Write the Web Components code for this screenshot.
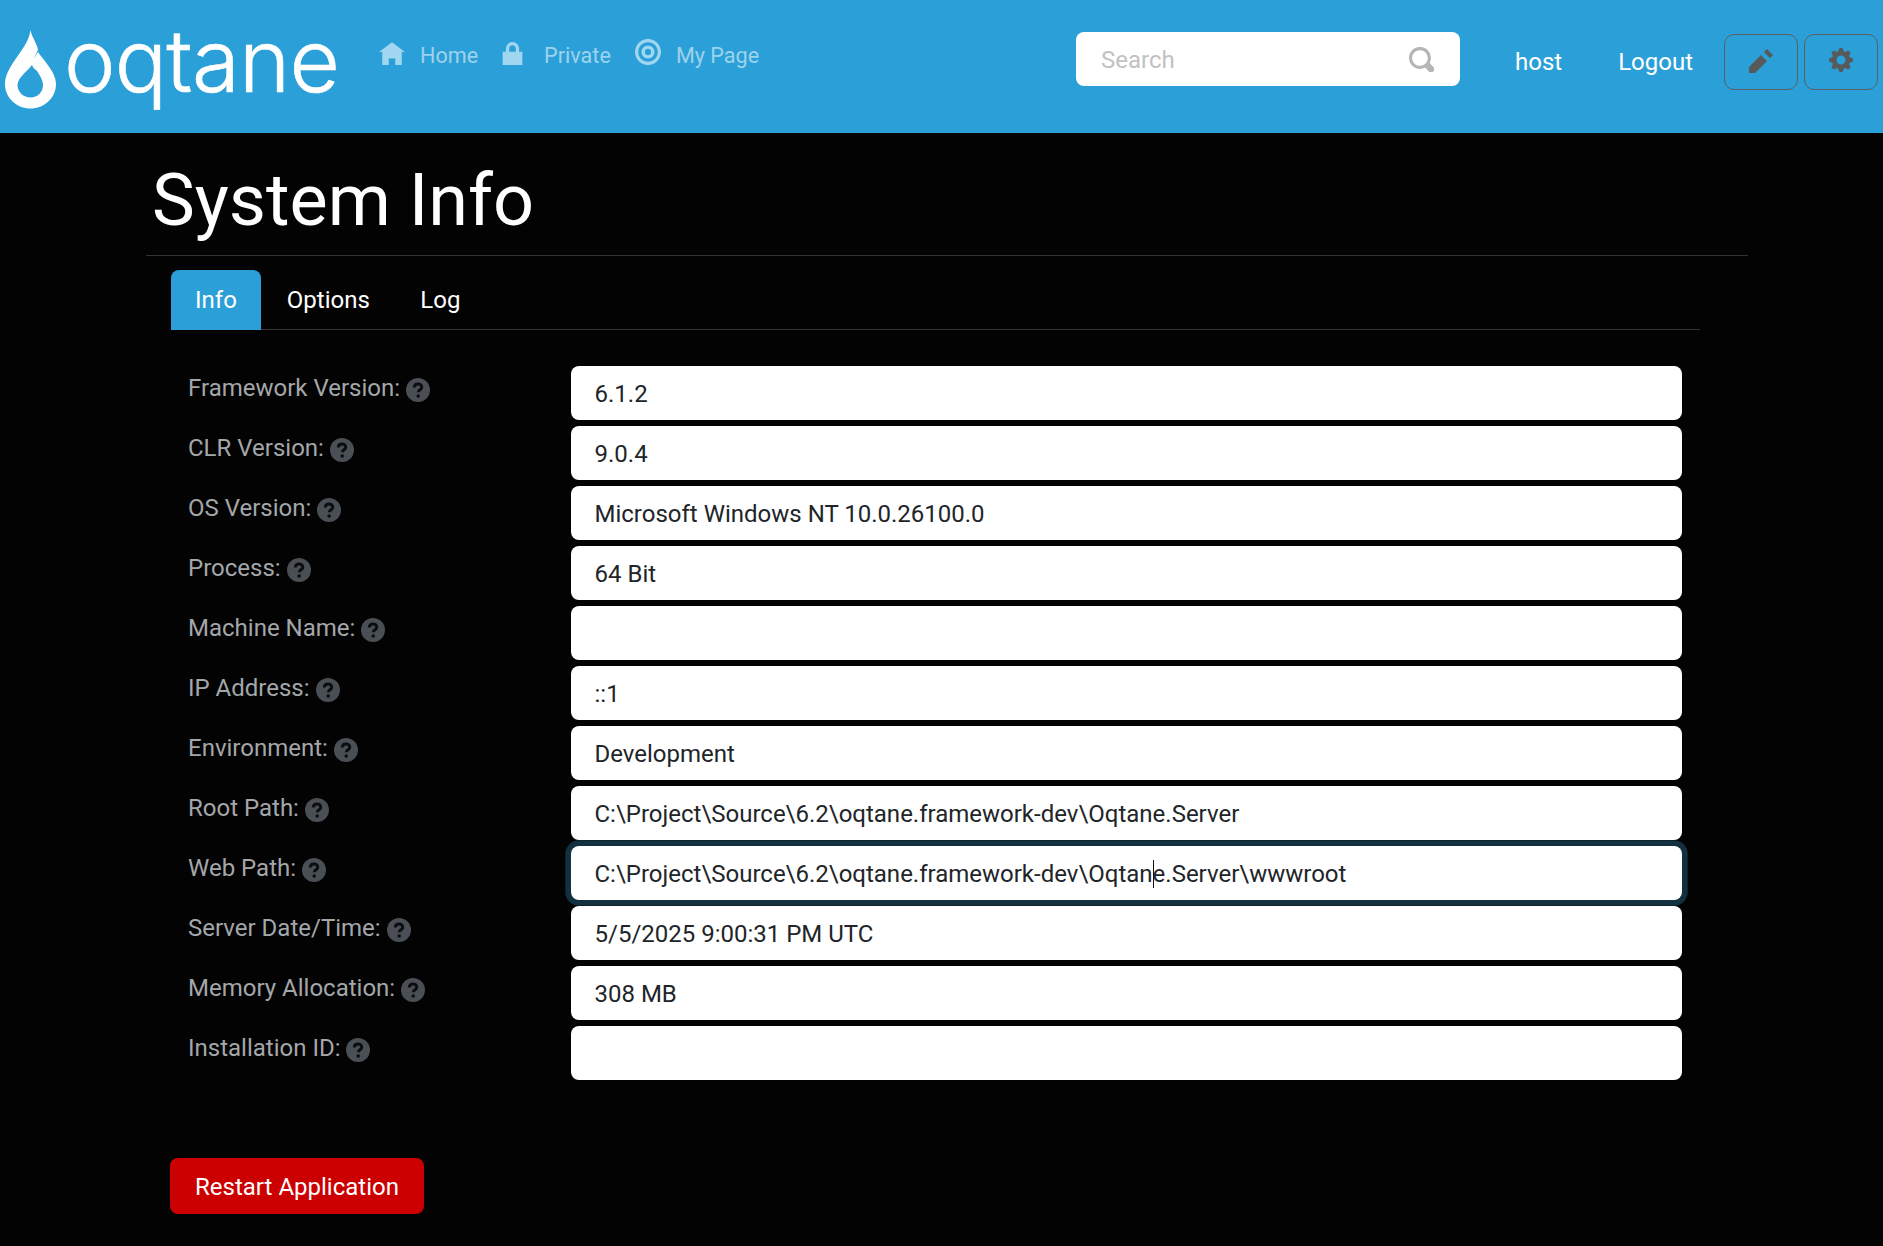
<!DOCTYPE html>
<html lang="en">
<head>
<meta charset="utf-8">
<title>System Info</title>
<style>
html,body{margin:0;padding:0;background:#030303;}
body{font-family:Roboto,"Liberation Sans",sans-serif;font-size:24px;color:#fff;}
</style>
</head>
<body>
<oq-app>
  <oq-header slot="header">
    <oq-logo>oqtane</oq-logo>
    <oq-nav-link icon="home">Home</oq-nav-link>
    <oq-nav-link icon="lock">Private</oq-nav-link>
    <oq-nav-link icon="target">My Page</oq-nav-link>
    <oq-search></oq-search>
    <oq-user-link>host</oq-user-link>
    <oq-user-link>Logout</oq-user-link>
    <oq-icon-button icon="pencil"></oq-icon-button>
    <oq-icon-button icon="cog"></oq-icon-button>
  </oq-header>
  <oq-title>System Info</oq-title>
  <oq-tabs>
    <oq-tab active>Info</oq-tab>
    <oq-tab>Options</oq-tab>
    <oq-tab>Log</oq-tab>
  </oq-tabs>
  <oq-form>
    <oq-field label="Framework Version:">6.1.2</oq-field>
    <oq-field label="CLR Version:">9.0.4</oq-field>
    <oq-field label="OS Version:">Microsoft Windows NT 10.0.26100.0</oq-field>
    <oq-field label="Process:">64 Bit</oq-field>
    <oq-field label="Machine Name:"></oq-field>
    <oq-field label="IP Address:">::1</oq-field>
    <oq-field label="Environment:">Development</oq-field>
    <oq-field label="Root Path:">C:\Project\Source\6.2\oqtane.framework-dev\Oqtane.Server</oq-field>
    <oq-field label="Web Path:" focused>C:\Project\Source\6.2\oqtane.framework-dev\Oqtan<oq-caret></oq-caret>e.Server\wwwroot</oq-field>
    <oq-field label="Server Date/Time:">5/5/2025 9:00:31 PM UTC</oq-field>
    <oq-field label="Memory Allocation:">308 MB</oq-field>
    <oq-field label="Installation ID:"></oq-field>
  </oq-form>
  <oq-danger-button>Restart Application</oq-danger-button>
</oq-app>
<script>
const ICONS = {
  home: ['0 0 8 7','M4 0l-4 3h1v4h2v-2h2v2h2v-4.03l1 .03-4-3z'],
  lock: ['0 0 6 7','M3 0c-1.1 0-2 .9-2 2v1h-1v4h6v-4h-1v-1c0-1.1-.9-2-2-2zm0 1c.56 0 1 .44 1 1v1h-2v-1c0-.56.44-1 1-1z'],
  target: ['0 0 8 8','M4 0c-2.2 0-4 1.8-4 4s1.8 4 4 4 4-1.8 4-4-1.8-4-4-4zm0 1c1.66 0 3 1.34 3 3s-1.34 3-3 3-3-1.34-3-3 1.34-3 3-3zm0 1c-1.1 0-2 .9-2 2s.9 2 2 2 2-.9 2-2-.9-2-2-2zm0 1c.56 0 1 .44 1 1s-.44 1-1 1-1-.44-1-1 .44-1 1-1z'],
  pencil: ['0 0 8 8','M6 0l-1 1 2 2 1-1-2-2zm-2 2l-4 4v2h2l4-4-2-2z'],
  cog: ['0 0 8 8','M3.5 0l-.5 1.19c-.1.03-.19.08-.28.13l-1.19-.5-.72.72.5 1.19c-.05.1-.09.18-.13.28l-1.19.5v1l1.19.5c.04.1.08.18.13.28l-.5 1.19.72.72 1.19-.5c.09.04.18.09.28.13l.5 1.19h1l.5-1.19c.09-.04.19-.08.28-.13l1.19.5.72-.72-.5-1.19c.04-.09.09-.19.13-.28l1.19-.5v-1l-1.19-.5c-.03-.09-.08-.19-.13-.28l.5-1.19-.72-.72-1.19.5c-.09-.04-.19-.09-.28-.13l-.5-1.19h-1zm.5 2.5c.83 0 1.5.67 1.5 1.5s-.67 1.5-1.5 1.5-1.5-.67-1.5-1.5.67-1.5 1.5-1.5z'],
  search: ['0 0 8 8','M3.5 0c-1.93 0-3.5 1.57-3.5 3.5s1.57 3.5 3.5 3.5c.59 0 1.17-.14 1.66-.41a1 1 0 0 0 .13.13l1 1a1.02 1.02 0 1 0 1.44-1.44l-1-1a1 1 0 0 0-.16-.13c.27-.49.44-1.06.44-1.66 0-1.93-1.57-3.5-3.5-3.5zm0 1c1.39 0 2.5 1.11 2.5 2.5 0 .66-.24 1.27-.66 1.72-.01.01-.02.02-.03.03a1 1 0 0 0-.13.13c-.44.4-1.04.63-1.69.63-1.39 0-2.5-1.11-2.5-2.5s1.11-2.5 2.5-2.5z']
};
function iconSvg(name, w, h, color){
  const [vb, d] = ICONS[name];
  return `<svg part="icon" width="${w}" height="${h}" viewBox="${vb}" fill="${color}" style="display:block;flex:none" aria-hidden="true"><path d="${d}"/></svg>`;
}
class Base extends HTMLElement{
  constructor(){ super(); this.attachShadow({mode:'open'}); }
  connectedCallback(){ this.shadowRoot.innerHTML = this.render(); }
}
customElements.define('oq-app', class extends Base{
  render(){ return `<style>
    :host{display:block;min-height:1246px;background:#030303;overflow:hidden}
    main{display:flex;flex-direction:column}
  </style><slot name="header"></slot><main><slot></slot></main>`; }
});
customElements.define('oq-header', class extends Base{
  render(){ return `<style>
    :host{display:flex;align-items:flex-start;height:133px;background:#2b9fd7;box-sizing:border-box;padding-left:5px;padding-right:5px}
  </style><slot></slot>`; }
});
customElements.define('oq-logo', class extends Base{
  render(){ return `<style>
    :host{display:flex;align-items:flex-start;width:374px;height:133px;flex:none;color:#fff}
    svg{display:block;flex:none;margin-top:30px}
    .w{font:300 87px/1 Inter,Lato,sans-serif;letter-spacing:-.8px;margin-left:7px;margin-top:17px;white-space:nowrap;-webkit-text-stroke:.6px #fff}
  </style><svg width="52" height="79" viewBox="5 30 52 79"><path fill-rule="evenodd" fill="#fff" d="M30.5 30C31.5 37 37 43 38 50L33.5 59L38 52C44 61 56 72 56 84C56 98 44 108.500 30.500 108.500C17 108.500 5 98 5 84C5 74 11 66 17 57C23 48 29 41 30.500 30ZM32 65C28 71 18 77 17.500 85C17.500 92 23.500 97.500 30.500 97.500C37.500 97.500 43 92 43 85C43 80 40 76 37 71L33.500 68Z"/></svg><span class="w"><slot></slot></span>`; }
});
customElements.define('oq-nav-link', class extends Base{
  render(){
    const n=this.getAttribute('icon');
    const w=n==='lock'?21:26, h=n==='target'?26:23;
    const gap={home:15,lock:21,target:15}[n];
    const mt=n==='target'?39:42;
    return `<style>
    :host{display:flex;align-items:flex-start;flex:none;color:rgba(255,255,255,.55);font-size:21.600px;line-height:28px;margin-right:24px}
    .i{margin-top:${mt}px;margin-right:${gap}px}
    .t{margin-top:42px;white-space:nowrap}
  </style><span class="i">${iconSvg(n,w,h,'#a0d6f0')}</span><span class="t"><slot></slot></span>`; }
});
customElements.define('oq-search', class extends Base{
  render(){ return `<style>
    :host{display:flex;align-items:center;justify-content:space-between;flex:none;box-sizing:border-box;width:384px;height:54px;margin-top:32px;margin-left:auto;margin-right:55px;background:#fff;border-radius:8px;padding:0 26px 0 25px}
    .p{color:#c2c2c2;font-size:24px;padding-top:1px}
  </style><span class="p">Search</span>${iconSvg('search',25,25,'#b5b5b5')}`; }
});
customElements.define('oq-user-link', class extends Base{
  render(){ return `<style>
    :host{display:block;flex:none;color:#fff;font-size:24px;line-height:28px;margin-top:48px;margin-right:56px;white-space:nowrap}
    :host(:last-of-type){margin-right:31px}
  </style><slot></slot>`; }
});
customElements.define('oq-icon-button', class extends Base{
  render(){ const last=this.getAttribute('icon')==='cog';
    return `<style>
    :host{display:flex;align-items:center;justify-content:center;flex:none;box-sizing:border-box;width:74px;height:56px;margin-top:34px;margin-right:${last?0:6}px;border:1.4px solid #5b5f63;border-radius:10px;background:transparent}
    svg{transform:translateY(${last?-2:-1}px)}
  </style>${iconSvg(this.getAttribute('icon'),24,24,'#58595b')}`; }
});
customElements.define('oq-title', class extends Base{
  render(){ return `<style>
    :host{display:block;box-sizing:border-box;height:123.400px;margin:0 135px 0 146px;padding:25px 0 0 6px;border-bottom:1.400px solid #333;color:#fff;font-size:72px;line-height:86px;font-weight:400}
  </style><slot></slot>`; }
});
customElements.define('oq-tabs', class extends Base{
  render(){ return `<style>
    :host{display:flex;align-items:stretch;height:60px;box-sizing:border-box;margin:14px 183px 0 170.500px;border-bottom:1.400px solid #333}
  </style><slot></slot>`; }
});
customElements.define('oq-tab', class extends Base{
  render(){ return `<style>
    :host{display:block;box-sizing:border-box;height:60px;padding:15px 25px 0 25.500px;line-height:30px;font-size:24px;color:#fff;border-radius:8px 8px 0 0}
    :host([active]){background:#2b9fd7;padding:15px 24.500px 0}
  </style><slot></slot>`; }
});
customElements.define('oq-form', class extends Base{
  render(){ return `<style>
    :host{display:flex;flex-direction:column;gap:6px;margin:36px 201.500px 0 188px}
  </style><slot></slot>`; }
});
customElements.define('oq-help', class extends Base{
  render(){ return `<style>
    :host{display:inline-block;width:24px;height:24px;flex:none}
    svg{display:block}
  </style><svg width="24" height="24" viewBox="0 0 24 24" aria-hidden="true"><circle cx="12" cy="12" r="12" fill="#4a4f56"/><path d="M8.300 9.600C8.300 7.300 10 6 12.100 6C14.200 6 15.800 7.300 15.800 9.200C15.800 11.600 12.300 11.900 12.300 14.300" fill="none" stroke="#0d0e10" stroke-width="2.900"/><circle cx="12.200" cy="18" r="1.800" fill="#0d0e10"/></svg>`; }
});
customElements.define('oq-field', class extends Base{
  render(){
    const focus=this.hasAttribute('focused');
    return `<style>
    :host{display:flex;align-items:flex-start;height:54px}
    .l{display:flex;align-items:flex-start;width:383px;flex:none;color:#a4a7aa;font-size:24px;line-height:34px;padding-top:5px;gap:6px}
    .l oq-help{margin-top:7px}
    .v{flex:1;box-sizing:border-box;height:53.500px;background:#fff;border-radius:8px;color:#212529;font-size:24px;line-height:57px;padding:0 23.500px;white-space:nowrap;${focus?'box-shadow:0 0 0 5.700px #12303f;':''}}
  </style><div class="l"><span>${this.getAttribute('label')}</span><oq-help></oq-help></div><div class="v"><slot></slot></div>`; }
});
customElements.define('oq-caret', class extends Base{
  render(){ return `<style>
    :host{display:inline-block;width:0;height:28px;vertical-align:-6px;border-left:1px solid #111;margin-right:-1px}
  </style>`; }
});
customElements.define('oq-danger-button', class extends Base{
  render(){ return `<style>
    :host{display:flex;align-items:center;justify-content:center;align-self:flex-start;box-sizing:border-box;width:254px;height:56px;margin:78px 0 0 170px;padding-top:1px;background:#cc0000;color:#fff;border-radius:8px;font-size:24px;white-space:nowrap}
  </style><slot></slot>`; }
});
</script>
</body>
</html>
